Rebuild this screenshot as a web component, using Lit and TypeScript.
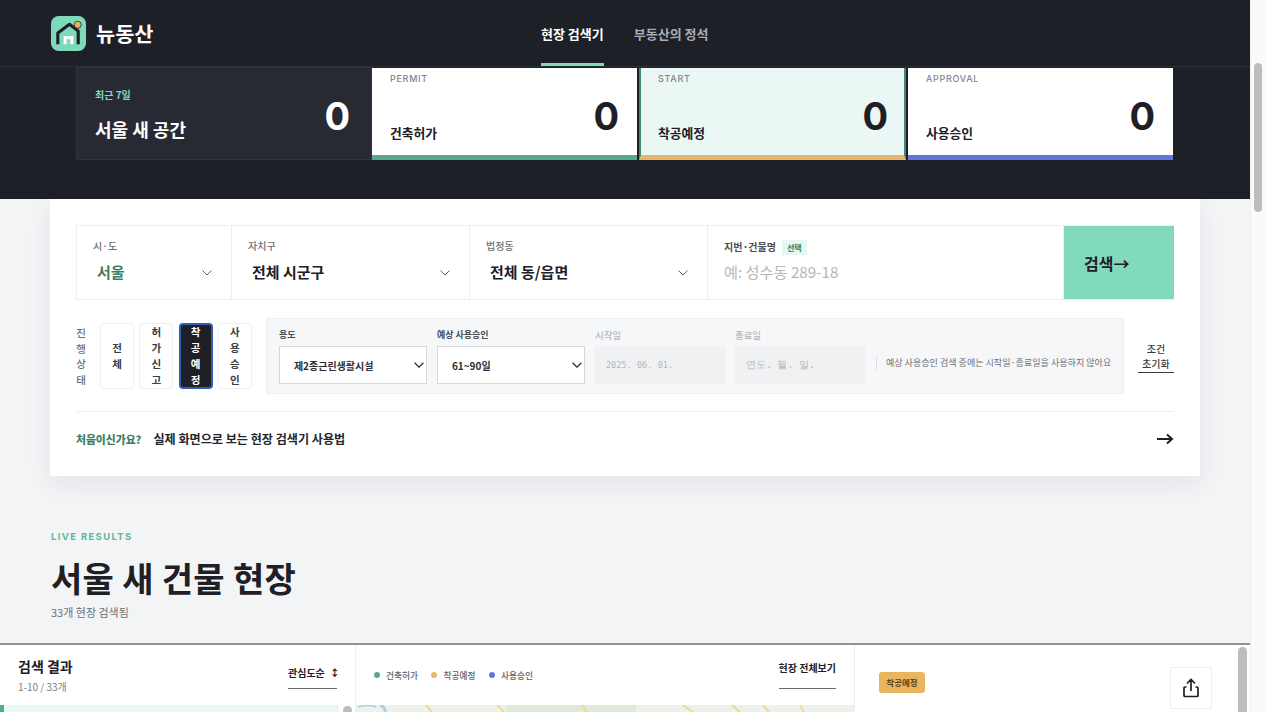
import { LitElement, html, css, svg } from "lit";
import { customElement } from "lit/decorators.js";

const chev = html`<svg class="chev" width="10" height="6" viewBox="0 0 10 6"><path d="M.5.500l4.500 4.500 4.500-4.500" fill="none" stroke="#5c6168" stroke-width="1"/></svg>`;
const chevDark = html`<svg class="chev" width="10" height="6" viewBox="0 0 11 6"><path d="M.7.500l4.800 4.800L10.300.500" fill="none" stroke="#25282e" stroke-width="1.300"/></svg>`;
const vert = (s: string) => Array.from(s).map((c) => html`<span>${c}</span>`);

const roads: [number, number][] = [[70, 6], [141, 7], [226, 5], [327, 10], [376, 8], [407, 6], [444, 4]];

@customElement("app-root")
export class AppRoot extends LitElement {
  static styles = css`
    :host { display: block; height: 712px; overflow: hidden; background: #f3f4f6; font-family: "Noto Sans CJK KR", "Noto Sans", sans-serif; color: #1e2026; }
    * { box-sizing: border-box; }
    .shell { display: flex; height: 712px; }
    .page { width: 1250px; height: 712px; overflow: hidden; flex: none; }
    .sb { width: 15px; flex: none; background: #fafafa; border-left: 1px solid #eeeeee; padding: 63px 3px 0 3px; }
    .sb i { display: block; width: 8px; height: 149px; border-radius: 4px; background: #bdbdbd; }

    header { height: 67px; background: #1e2028; border-bottom: 1px solid #2c2f36; display: flex; align-items: center; padding: 0 50px 0 51px; }
    .logo { display: flex; align-items: center; gap: 10px; width: 490px; color: #fff; font-size: 20.800px; font-weight: 700; }
    nav { display: flex; gap: 30px; height: 66px; font-size: 13px; font-weight: 700; }
    nav a { display: flex; align-items: center; color: #a9acb2; border-bottom: 3px solid transparent; padding-top: 3px; }
    nav a.on { color: #fff; border-bottom-color: #7fd9bb; }

    .hero { background: #1e2028; height: 132px; padding: 0 77px 0 76px; }
    .kpis { display: grid; grid-template-columns: 294px 265px 267px 265px; column-gap: 2px; height: 93px; }
    .kpi { display: flex; justify-content: space-between; background: #fff; border-bottom: 5px solid; margin-top: 1px; height: 92px; padding: 5px 18px 0 18px; }
    .kpi .en { font-family: Inter, sans-serif; font-size: 9px; letter-spacing: .7px; color: #7f838a; font-weight: 500; line-height: 11px; }
    .kpi .ko { font-size: 12.800px; font-weight: 700; margin-top: 39px; line-height: 20px; }
    .kpi .num { font-family: Inter, sans-serif; font-weight: 700; font-size: 38px; line-height: 46px; margin-top: 20px; }
    .kpi.dark { background: #272a33; border: 1px solid #31343c; color: #fff; padding: 20px 21px 0 18px; margin: 0 -2px 0 0; height: 93px; }
    .kpi.dark .tag { font-size: 10px; font-weight: 700; color: #7fd9bb; line-height: 14px; }
    .kpi.dark .ko { font-size: 18px; margin-top: 14px; line-height: 26px; }
    .kpi.dark .num { margin-top: 5px; }
    .kpi.permit { border-bottom-color: #57a98d; }
    .kpi.start { border-bottom-color: #e6b768; background: #eaf7f4; border-left: 2px solid #3f8a72; border-right: 2px solid #3f8a72; padding-left: 17px; padding-right: 16px; }
    .kpi.approval { border-bottom-color: #6076dd; }

    .card { margin: 0 50px; height: 277px; background: #fff; box-shadow: 0 8px 24px rgba(30,32,38,.07); padding: 26px 26px 0; }
    .sel { display: flex; height: 75px; border: 1px solid #eceef0; width: 1098px; }
    .f { border-right: 1px solid #eceef0; padding: 13px 17px 0 16px; position: relative; flex: none; width: 238px; }
    .f.sido { width: 155px; }
    .f.addr { width: 356px; }
    .f label { display: block; font-size: 10px; line-height: 14px; color: #6b7078; font-weight: 500; }
    .f.addr label { font-weight: 700; color: #4a4e55; margin-top: 1px; }
    .f .v { font-size: 15px; font-weight: 700; line-height: 22px; margin-top: 8px; padding-left: 4px; }
    .f .chev { position: absolute; right: 19px; top: 44px; }
    .f.sido .v { color: #3c7f66; }
    .opt { margin-left: 6px; background: #e6f6f0; color: #2f7c60; font-size: 8px; font-weight: 700; padding: 0 5px; display: inline-block; height: 15px; line-height: 15px; }
    .ph { font-size: 15.200px; line-height: 22px; margin-top: 5px; color: #b4b7bc; }
    .go { flex: 1; background: #82dabc; font-size: 16px; font-weight: 700; display: flex; align-items: center; padding-left: 20px; margin-right: -1px; }

    .row { display: flex; align-items: center; margin-top: 17px; height: 78px; }
    .vt { display: flex; flex-direction: column; align-items: center; justify-content: center; font-size: 10.500px; font-weight: 500; line-height: 15.500px; }
    .lbl { width: 10px; color: #6b7078; margin-right: 14px; }
    .st { display: flex; gap: 5.300px; margin-right: 14px; }
    .st .vt { width: 34px; height: 66px; border: 1px solid #eceef0; border-radius: 4px; font-weight: 700; color: #3a3d44; line-height: 16px; }
    .st .vt.on { background: #1e2026; color: #fff; border: 2px solid #2f5fb3; }
    .opts { width: 858px; height: 76px; background: #f6f7f9; border: 1px solid #eceef0; display: flex; padding: 9px 12px 0; gap: 10px; flex: none; }
    .o { width: 148px; flex: none; }
    .o.off { width: 130px; }
    .o label { display: block; font-size: 9px; font-weight: 700; color: #4a4e55; line-height: 14px; margin-bottom: 4px; }
    .o.off label { color: #b4b7bc; font-weight: 500; font-size: 9.500px; }
    .box { height: 38px; background: #fff; border: 1px solid #d5d8dc; display: flex; align-items: center; justify-content: space-between; padding: 0 2px 0 14px; font-size: 10px; font-weight: 700; color: #2b2e34; }
    .o.off .box { background: #eff1f3; border-color: #eff1f3; color: #b4b7bc; font-weight: 400; font-family: "DejaVu Sans Mono", monospace; padding-left: 10px; font-size: 8.600px; }
    .o.off .box.kr { font-size: 9.600px; }
    .note { align-self: center; margin: 5px 0 0 1px; border-left: 1px solid #dcdfe3; padding-left: 9px; font-size: 9.050px; line-height: 14px; color: #6b7078; white-space: nowrap; }
    .reset { margin: 1px 0 0 14px; width: 36px; text-align: center; font-size: 10px; font-weight: 500; line-height: 15px; border-bottom: 1px solid #3a3d44; padding-bottom: 1px; color: #3a3d44; }

    .guide { margin-top: 16px; border-top: 1px solid #eceef0; height: 54px; display: flex; align-items: center; width: 1098px; font-size: 12.100px; font-weight: 700; color: #23262c; }
    .guide b { color: #3c7f66; font-size: 10.800px; margin-right: 12px; }
    .guide svg { margin: 1px 0 0 auto; }

    .live { height: 167px; padding: 54px 50px 0 51px; }
    .eyebrow { font-family: Inter, sans-serif; font-size: 9.500px; font-weight: 700; letter-spacing: 1.350px; color: #5fb79a; line-height: 14px; }
    h1 { margin: 12px 0 0; font-size: 34px; font-weight: 700; line-height: 44px; letter-spacing: 0.3px; }
    .sub { font-size: 11px; color: #6b7078; line-height: 14px; margin-top: 5px; }

    .panel { border-top: 2px solid #8f9196; height: 69px; background: #fff; display: flex; }
    .left { width: 356px; border-right: 1px solid #eceef0; position: relative; }
    .lh { height: 60px; display: flex; justify-content: space-between; padding: 12px 18px 0; }
    .lh h2 { margin: 0; font-size: 14px; line-height: 18px; font-weight: 700; }
    .lh small { display: block; font-size: 10px; color: #7a7e85; line-height: 13px; margin-top: 5px; }
    .sort { height: 32px; width: 49px; border-bottom: 1px solid #6a6d73; font-size: 10px; font-weight: 700; white-space: nowrap; line-height: 14px; padding-top: 9px; display: flex; gap: 5px; }
    .first { height: 7px; background: #eaf7f4; border-left: 4px solid #4fae8e; margin-right: 16px; }
    .rail { position: absolute; right: 0; top: 60px; width: 16px; height: 7px; }
    .rail i { display: block; width: 9px; height: 9px; margin: 1px auto; border-radius: 5px; background: #bdbdbd; }
    .mid { width: 499px; border-right: 1px solid #eceef0; }
    .mh { height: 60px; display: flex; justify-content: space-between; padding: 0 18px; }
    .legend { display: flex; align-items: center; gap: 13.500px; font-size: 8.700px; color: #5f636a; font-weight: 500; }
    .legend span { display: flex; align-items: center; gap: 6px; }
    .legend i { width: 6px; height: 6px; border-radius: 50%; }
    .legend .a { background: #57a98d; }
    .legend .b { background: #e6b768; }
    .legend .c { background: #6076dd; }
    .all { height: 44px; font-size: 10px; font-weight: 700; border-bottom: 1px solid #6a6d73; padding-top: 15px; }
    .map { display: block; height: 7px; width: 498px; }
    .right { flex: 1; padding: 22px 38px 0 24px; display: flex; justify-content: space-between; position: relative; }
    .badge { background: #e9b55f; border-radius: 3px; width: 46px; height: 21px; font-size: 8.500px; font-weight: 700; color: #5a4520; text-align: center; line-height: 21px; margin-top: 5px; }
    .share { width: 42px; height: 42px; border: 1px solid #eceef0; display: flex; align-items: center; justify-content: center; }
    .rs { position: absolute; right: 3px; top: 2px; width: 9px; height: 70px; border-radius: 5px; background: #bdbdbd; }
  `;

  render() {
    return html`<div class="shell"><div class="page">
      <header>
        <div class="logo">
          <svg width="35" height="35" viewBox="0 0 36 36">
            <rect width="36" height="36" rx="8" fill="#7fd9bb"/>
            <path d="M7 29V17.500L19 8.500 28 15.500V29" fill="none" stroke="#1e2026" stroke-width="3.200" stroke-linejoin="round"/>
            <path d="M13 29V20.500h10V29h-3v-5h-4v5z" fill="#fff"/>
            <circle cx="27.500" cy="9" r="3.600" fill="#eab464" stroke="#1e2026" stroke-width=".8"/>
          </svg>
          <span>뉴동산</span>
        </div>
        <nav><a class="on">현장 검색기</a><a>부동산의 정석</a></nav>
      </header>

      <section class="hero">
        <div class="kpis">
          <div class="kpi dark">
            <div><div class="tag">최근 7일</div><div class="ko">서울 새 공간</div></div>
            <div class="num">0</div>
          </div>
          <div class="kpi permit"><div><div class="en">PERMIT</div><div class="ko">건축허가</div></div><div class="num">0</div></div>
          <div class="kpi start"><div><div class="en">START</div><div class="ko">착공예정</div></div><div class="num">0</div></div>
          <div class="kpi approval"><div><div class="en">APPROVAL</div><div class="ko">사용승인</div></div><div class="num">0</div></div>
        </div>
      </section>

      <section class="card">
        <div class="sel">
          <div class="f sido"><label>시·도</label><div class="v">서울</div>${chev}</div>
          <div class="f"><label>자치구</label><div class="v">전체 시군구</div>${chev}</div>
          <div class="f"><label>법정동</label><div class="v">전체 동/읍면</div>${chev}</div>
          <div class="f addr"><label>지번·건물명<span class="opt">선택</span></label><div class="ph">예: 성수동 289-18</div></div>
          <div class="go">검색→</div>
        </div>
        <div class="row">
          <div class="vt lbl">${vert("진행상태")}</div>
          <div class="st">
            <div class="vt">${vert("전체")}</div>
            <div class="vt">${vert("허가신고")}</div>
            <div class="vt on">${vert("착공예정")}</div>
            <div class="vt">${vert("사용승인")}</div>
          </div>
          <div class="opts">
            <div class="o"><label>용도</label><div class="box">제2종근린생활시설${chevDark}</div></div>
            <div class="o"><label>예상 사용승인</label><div class="box">61~90일${chevDark}</div></div>
            <div class="o off"><label>시작일</label><div class="box">2025. 06. 01.</div></div>
            <div class="o off"><label>종료일</label><div class="box kr">연도. 월. 일.</div></div>
            <div class="note">예상 사용승인 검색 중에는 시작일·종료일을 사용하지 않아요</div>
          </div>
          <div class="reset">조건<br/>초기화</div>
        </div>
        <div class="guide">
          <b>처음이신가요?</b>실제 화면으로 보는 현장 검색기 사용법
          <svg width="18" height="12" viewBox="0 0 18 12"><path d="M1 6h15M11 1.500l5 4.500-5 4.500" fill="none" stroke="#1e2026" stroke-width="2"/></svg>
        </div>
      </section>

      <section class="live">
        <div class="eyebrow">LIVE RESULTS</div>
        <h1>서울 새 건물 현장</h1>
        <div class="sub">33개 현장 검색됨</div>
      </section>

      <section class="panel">
        <div class="left">
          <div class="lh">
            <div><h2>검색 결과</h2><small>1-10 / 33개</small></div>
            <div class="sort">관심도순 <span>↕</span></div>
          </div>
          <div class="first"></div>
          <div class="rail"><i></i></div>
        </div>
        <div class="mid">
          <div class="mh">
            <div class="legend">
              <span><i class="a"></i>건축허가</span>
              <span><i class="b"></i>착공예정</span>
              <span><i class="c"></i>사용승인</span>
            </div>
            <div class="all">현장 전체보기</div>
          </div>
          <svg class="map" viewBox="0 0 498 7" preserveAspectRatio="none">
            <rect width="498" height="7" fill="#eef1ea"/>
            <rect x="150" width="130" height="7" fill="#dfeadb"/>
            <path d="M2 2q10-3 18 0" fill="none" stroke="#a9cdea" stroke-width="1.500"/>
            <path d="M24 0q6 3 5 7" fill="none" stroke="#a9cdea" stroke-width="3"/>
            ${roads.map(([x, w]) => svg`<path d="M${x} 0l${w} 7" fill="none" stroke="#f2d98a" stroke-width="2"/>`)}
          </svg>
        </div>
        <div class="right">
          <div class="badge">착공예정</div>
          <div class="share">
            <svg width="18" height="20" viewBox="0 0 18 20"><path d="M9 13V2M5 5.500L9 1.500l4 4M4.500 9H3a1 1 0 0 0-1 1v7.500a1 1 0 0 0 1 1h12a1 1 0 0 0 1-1V10a1 1 0 0 0-1-1h-1.500" fill="none" stroke="#1e2026" stroke-width="1.700"/></svg>
          </div>
          <div class="rs"></div>
        </div>
      </section>
    </div><div class="sb"><i></i></div></div>`;
  }
}
